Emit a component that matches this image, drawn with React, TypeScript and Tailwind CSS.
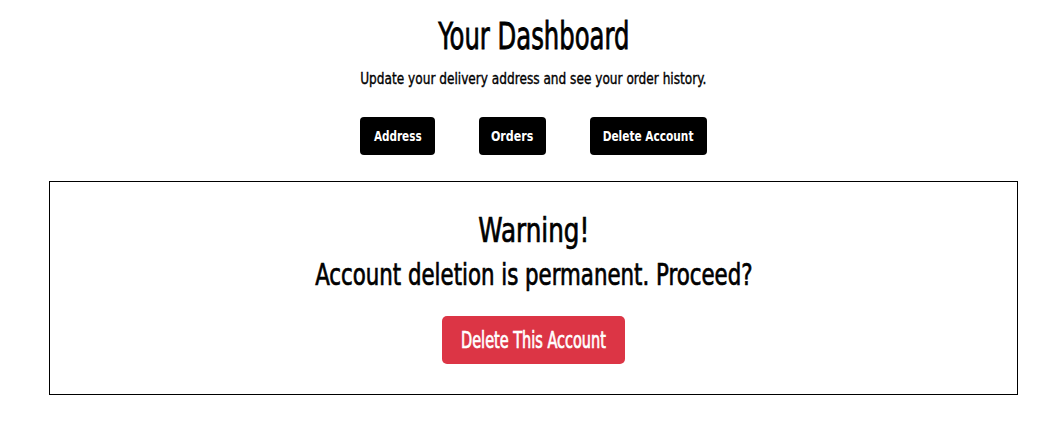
import React from "react";

const font = { fontFamily: '"DejaVu Sans Condensed", "DejaVu Sans", sans-serif' };

export default function App() {
  return (
    <div className="min-h-[431px] bg-white text-black" style={font}>
      <div className="ml-[49px] w-[969px] flex flex-col items-center">
        <h1 className="mt-[15px] text-[37px] leading-[44px] whitespace-nowrap [-webkit-text-stroke-width:0.8px]">
          <span className="inline-block scale-x-[0.73]">Your Dashboard</span>
        </h1>
        <p className="mt-[10px] text-[15px] leading-[20px] whitespace-nowrap [-webkit-text-stroke-width:0.35px]">
          <span className="inline-block scale-x-[0.9]">Update your delivery address and see your order history.</span>
        </p>
        <div className="mt-[28px] flex gap-[44px]">
          <button className="h-[38px] w-[75px] flex items-center justify-center rounded-[4px] bg-black text-white text-[14px] font-bold whitespace-nowrap">
            <span className="inline-block scale-x-[0.83]">Address</span>
          </button>
          <button className="h-[38px] w-[67px] flex items-center justify-center rounded-[4px] bg-black text-white text-[14px] font-bold whitespace-nowrap">
            <span className="inline-block scale-x-[0.88]">Orders</span>
          </button>
          <button className="h-[38px] w-[117px] flex items-center justify-center rounded-[4px] bg-black text-white text-[14px] font-bold whitespace-nowrap">
            <span className="inline-block scale-x-[0.84]">Delete Account</span>
          </button>
        </div>
      </div>
      <div className="ml-[49px] mt-[26px] w-[969px] h-[214px] border border-black flex flex-col items-center">
        <h2 className="mt-[29px] text-[33px] leading-[40px] whitespace-nowrap [-webkit-text-stroke-width:0.7px]">
          <span className="inline-block scale-x-[0.83]">Warning!</span>
        </h2>
        <h3 className="mt-[6px] text-[30px] leading-[36px] whitespace-nowrap [-webkit-text-stroke-width:0.7px]">
          <span className="inline-block scale-x-[0.79]">Account deletion is permanent. Proceed?</span>
        </h3>
        <button className="mt-[23px] h-[48px] w-[183px] flex items-center justify-center rounded-[5px] bg-[#dc3545] text-white text-[23px] whitespace-nowrap [-webkit-text-stroke-width:0.7px]">
          <span className="inline-block scale-x-[0.7]">Delete This Account</span>
        </button>
      </div>
    </div>
  );
}
